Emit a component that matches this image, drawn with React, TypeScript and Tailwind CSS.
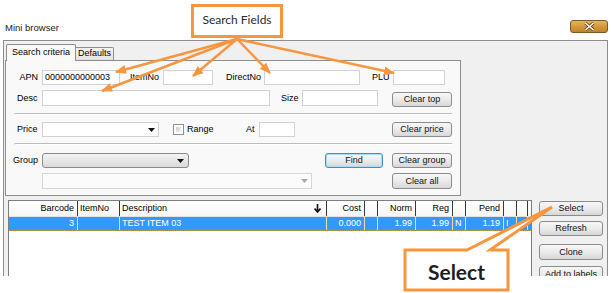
import React from "react";
import clsx from "clsx";

const Field = ({ className, value }: { className: string; value?: string }) => (
  <div
    className={clsx(
      "flex items-center border border-[#cfd2d6] bg-white pl-[2px] leading-none",
      className
    )}
  >
    {value}
  </div>
);

const Btn = ({
  className,
  focus,
  children,
}: {
  className: string;
  focus?: boolean;
  children: React.ReactNode;
}) => (
  <div
    className={clsx(
      "flex items-center justify-center rounded-[3px] border bg-linear-to-b from-[#f7f7f7] via-[#ebebeb] to-[#d7d7d7] leading-none text-[#111]",
      focus
        ? "border-[#3c8fd0] shadow-[inset_0_0_0_1px_#a6dcf7]"
        : "border-[#8c8c8c]",
      className
    )}
  >
    {children}
  </div>
);

const Arrow = ({ color }: { color: string }) => (
  <svg width="7" height="4" viewBox="0 0 7 4">
    <path d="M0 0h7L3.5 4z" fill={color} />
  </svg>
);

const Sep = () => (
  <div className="ml-[8px] mt-[6px] h-[2px] w-[438px] rounded-tl-[2px] border-t border-l border-[#bcbcbc] border-b border-b-white" />
);

const columns = [
  { w: "w-[69px]", head: "Barcode", val: "3", right: true },
  { w: "w-[42px]", head: "ItemNo", val: "", right: false },
  { w: "w-[207px]", head: "Description", val: "TEST ITEM 03", right: false },
  { w: "w-[38px]", head: "Cost", val: "0.000", right: true },
  { w: "w-[13px]", head: "", val: "", right: false },
  { w: "w-[38px]", head: "Norm", val: "1.99", right: true },
  { w: "w-[37px]", head: "Reg", val: "1.99", right: true },
  { w: "w-[13px]", head: "", val: "N", right: false },
  { w: "w-[38px]", head: "Pend", val: "1.19", right: true },
  { w: "w-[13px]", head: "", val: "I", right: false },
  { w: "w-[11px]", head: "", val: "", right: false },
];

export default function App() {
  return (
    <div className="relative h-[293px] w-[611px] overflow-hidden bg-white font-['Liberation_Sans',Arial,sans-serif] text-[9px] text-black">
      {/* title bar */}
      <div className="flex h-[40px] justify-between">
        <span className="ml-[5px] mt-[23px] text-[9.5px] leading-[10px] text-[#1a1a1a]">
          Mini browser
        </span>
        <div className="mr-[3px] mt-[20px] flex h-[13px] w-[38px] items-center justify-center rounded-[3px] border border-[#7b5a2a] bg-linear-to-b from-[#e8b45a] via-[#d39a3c] to-[#c08428]">
          <svg width="11" height="9" viewBox="0 0 11 9">
            <path d="M1.5 1l8 7M9.5 1l-8 7" stroke="#5a3e16" strokeWidth="3" />
            <path d="M1.5 1l8 7M9.5 1l-8 7" stroke="#fff" strokeWidth="1.6" />
          </svg>
        </div>
      </div>

      {/* dialog body */}
      <div className="mx-[3px] h-[236px] overflow-hidden border-l border-t border-r border-[#8d8d8d] bg-[#f0f0f0] pt-[3px]">
        {/* tabs */}
        <div className="ml-[2px] flex h-[16px] items-end">
          <div className="relative z-10 -mb-px flex h-[17px] w-[70px] items-center justify-center rounded-t-[2px] border border-b-0 border-[#8d8d8d] bg-[#f9f9f9] pb-[1px]">
            Search criteria
          </div>
          <div className="flex h-[13px] w-[38px] items-center justify-center rounded-tr-[2px] border border-l-0 border-b-0 border-[#8d8d8d] bg-linear-to-b from-[#f4f4f4] to-[#e2e2e2]">
            Defaults
          </div>
        </div>

        {/* tab panel */}
        <div className="ml-[1px] h-[136px] w-[456px] border border-[#8d8d8d] bg-[#f9f9f9]">
          <div className="mt-[9px] flex h-[15px] items-center">
            <span className="w-[36px] pr-[4px] text-right">APN</span>
            <Field className="h-[15px] w-[78px]" value="0000000000003" />
            <span className="w-[43px] pl-[10px]">ItemNo</span>
            <Field className="h-[15px] w-[50px]" />
            <span className="w-[51px] pl-[13px]">DirectNo</span>
            <Field className="h-[15px] w-[96px]" />
            <span className="w-[33px] pl-[12px]">PLU</span>
            <Field className="h-[15px] w-[52px]" />
          </div>

          <div className="mt-[5px] flex h-[17px] items-start">
            <span className="w-[36px] pl-[11px] leading-[16px]">Desc</span>
            <Field className="h-[16px] w-[228px]" />
            <span className="w-[32px] pl-[11px] leading-[16px]">Size</span>
            <Field className="h-[16px] w-[76px]" />
            <Btn className="ml-[14px] mt-[2px] h-[15px] w-[60px]">Clear top</Btn>
          </div>

          <Sep />

          <div className="mt-[7px] flex h-[15px] items-center">
            <span className="w-[36px] pl-[11px]">Price</span>
            <div className="flex h-[15px] w-[117px] items-center justify-end border border-[#cfd2d6] bg-white pr-[3px]">
              <Arrow color="#111" />
            </div>
            <div className="ml-[14px] h-[11px] w-[11px] border border-[#8e8f8f] bg-white p-[2px]">
              <div className="h-full w-full bg-linear-to-br from-[#cfcfcf] to-[#f4f4f4]" />
            </div>
            <span className="ml-[3px] w-[59px]">Range</span>
            <span className="w-[13px]">At</span>
            <Field className="h-[15px] w-[36px]" />
            <Btn className="ml-[97px] h-[15px] w-[60px]">Clear price</Btn>
          </div>

          <Sep />

          <div className="mt-[8px] flex h-[15px] items-center">
            <span className="w-[36px] pl-[7px]">Group</span>
            <div className="flex h-[15px] w-[147px] items-center justify-end rounded-[3px] border border-[#8a8a8a] bg-linear-to-b from-[#f3f3f3] to-[#dadada] pr-[4px]">
              <Arrow color="#111" />
            </div>
            <Btn focus className="ml-[136px] h-[15px] w-[58px]">
              Find
            </Btn>
            <Btn className="ml-[9px] h-[15px] w-[60px]">Clear group</Btn>
          </div>

          <div className="mt-[5px] flex h-[16px] items-center">
            <div className="w-[36px]" />
            <div className="flex h-[16px] w-[270px] items-center justify-end border border-[#d6d6d6] bg-[#fbfbfb] pr-[3px]">
              <Arrow color="#a8a8a8" />
            </div>
            <Btn className="ml-[80px] h-[16px] w-[60px]">Clear all</Btn>
          </div>
        </div>

        {/* grid + buttons */}
        <div className="mt-[4px] flex items-start">
          <div className="ml-[4px] h-[76px] w-[524px] border-l border-t border-r border-[#7a7d82] bg-white">
            <div className="flex h-[16px] border-b border-[#e2e2e2] bg-linear-to-b from-white to-[#f6f6f6]">
              {columns.map((c, i) => (
                <div
                  key={i}
                  className={clsx(
                    "flex h-full items-center border-r border-[#3a3a3a]",
                    c.w,
                    c.right ? "justify-end pr-[3px]" : "pl-[2px]",
                    i === 2 && "justify-between pr-[5px]"
                  )}
                >
                  {c.head}
                  {i === 2 && (
                    <svg width="7" height="9" viewBox="0 0 7 9">
                      <path d="M3.5 0v7M0.5 4.5l3 3.5 3-3.5" stroke="#111" strokeWidth="1.6" fill="none" />
                    </svg>
                  )}
                </div>
              ))}
            </div>
            <div className="flex h-[14px] border-b border-dotted border-[#b89a50] bg-[#3399ff] text-white">
              {columns.map((c, i) => (
                <div
                  key={i}
                  className={clsx(
                    "flex h-full items-center border-r border-[#f3dca0]",
                    c.w,
                    c.right ? "justify-end pr-[3px]" : "pl-[2px]"
                  )}
                >
                  {c.val}
                </div>
              ))}
            </div>
          </div>

          <div className="ml-[7px] flex w-[64px] flex-col">
            <Btn className="mt-[1px] h-[15px] w-[64px]">Select</Btn>
            <Btn className="mt-[5px] h-[15px] w-[64px]">Refresh</Btn>
            <Btn className="mt-[8px] h-[16px] w-[64px]">Clone</Btn>
            <Btn className="mt-[6px] h-[16px] w-[64px]">Add to labels</Btn>
          </div>
        </div>
      </div>

      {/* annotations */}
      <svg
        className="pointer-events-none absolute left-0 top-0"
        width="611"
        height="293"
        viewBox="0 0 611 293"
      >
        <defs>
          <marker
            id="head"
            markerUnits="userSpaceOnUse"
            markerWidth="11"
            markerHeight="9"
            refX="10"
            refY="4.5"
            orient="auto"
          >
            <path d="M0 0L11 4.5L0 9z" fill="#f7963f" />
          </marker>
        </defs>
        <g stroke="#f7963f" strokeWidth="2.5" fill="none" markerEnd="url(#head)">
          <line x1="237" y1="39" x2="116" y2="72" />
          <line x1="237" y1="39" x2="102" y2="91" />
          <line x1="237" y1="39" x2="193" y2="76" />
          <line x1="237" y1="39" x2="270" y2="73" />
          <line x1="237" y1="39" x2="394" y2="73" />
        </g>
        <path
          d="M405 250H467L552 207L490 250H508V290H405Z"
          fill="#fff"
          stroke="#f7963f"
          strokeWidth="3"
          strokeLinejoin="miter"
        />
      </svg>

      <div className="absolute left-[191px] top-[4px] flex h-[34px] w-[92px] justify-center border-[3px] border-[#f7963f] bg-white pt-[6px] font-['Lato',sans-serif] text-[12px] leading-[14px] text-[#2a2a2a]">
        Search Fields
      </div>
      <div className="absolute left-[405px] top-[250px] flex h-[40px] w-[103px] items-center justify-center pt-[2px] font-['Lato',sans-serif] text-[21px] font-bold leading-none text-[#1e1e1e]">
        Select
      </div>
    </div>
  );
}
